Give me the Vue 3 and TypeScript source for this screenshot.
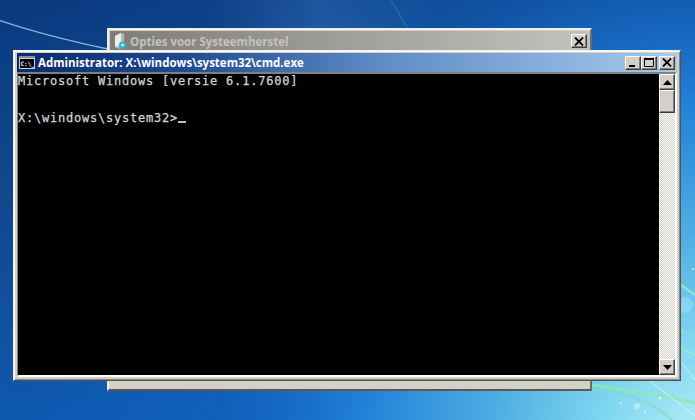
<script setup lang="ts">
const consoleLines: string[] = [
  'Microsoft Windows [versie 6.1.7600]',
  '',
  '',
  'X:\\windows\\system32>',
]
</script>

<template>
  <div class="desktop">
    <svg class="streaks" width="695" height="420" viewBox="0 0 695 420">
      <defs>
        <radialGradient id="glow" cx="700" cy="440" r="620" gradientUnits="userSpaceOnUse">
          <stop offset="0" stop-color="#b4eef6" />
          <stop offset="0.16" stop-color="#7fd6f0" />
          <stop offset="0.34" stop-color="#4cace2" />
          <stop offset="0.55" stop-color="#2080d8" />
          <stop offset="0.78" stop-color="#1264c4" stop-opacity="0.35" />
          <stop offset="1" stop-color="#1264c4" stop-opacity="0" />
        </radialGradient>
        <linearGradient id="sheen" x1="0" y1="0" x2="1" y2="0">
          <stop offset="0" stop-color="#6aa0e0" stop-opacity="0" />
          <stop offset="0.5" stop-color="#6aa0e0" stop-opacity="0.18" />
          <stop offset="1" stop-color="#6aa0e0" stop-opacity="0" />
        </linearGradient>
      </defs>
      <rect width="695" height="420" fill="url(#glow)" />
      <rect x="200" y="0" width="240" height="50" fill="url(#sheen)" />
      <path d="M0 20.5 C40 34 75 42 108 49" stroke="#a8cbe8" stroke-width="1.3" fill="none" opacity="0.85" />
      <path d="M391 0 L408 29" stroke="#2c8f92" stroke-width="1" fill="none" opacity="0.8" />
      <path d="M592 385 C630 390 665 396 695 403" stroke="#8ee8b0" stroke-width="3" fill="none" opacity="0.8" />
      <path d="M592 389 C625 392 650 400 672 420" stroke="#79dfc0" stroke-width="3" fill="none" opacity="0.55" />
      <path d="M650 381 L695 416" stroke="#d8f6fb" stroke-width="1" fill="none" opacity="0.85" />
      <path d="M681 285 L695 295" stroke="#a8ecc8" stroke-width="2.5" fill="none" opacity="0.7" />
      <path d="M681 330 L695 337" stroke="#a8ecc8" stroke-width="2" fill="none" opacity="0.35" />
      <path d="M681 348 L695 355" stroke="#a8ecc8" stroke-width="2.5" fill="none" opacity="0.55" />
      <path d="M681 362 L695 380" stroke="#e0f8fb" stroke-width="1" fill="none" opacity="0.7" />
      <circle cx="685" cy="305" r="8" fill="#c0ecf8" opacity="0.35" />
      <circle cx="637" cy="406" r="3" fill="#c8f0f8" opacity="0.7" />
      <circle cx="660" cy="398" r="1.5" fill="#e2f8fc" opacity="0.8" />
      <circle cx="621" cy="403" r="1" fill="#e2f8fc" opacity="0.8" />
      <circle cx="645" cy="412" r="1" fill="#e2f8fc" opacity="0.8" />
      <circle cx="693" cy="269" r="1" fill="#e2f8fc" opacity="0.9" />
    </svg>

    <section class="win back">
      <header class="back-title">
        <svg class="back-icon" width="13" height="16" viewBox="0 0 13 16">
          <path d="M1 3 L7 0 L10 1 L10 14 L5 16 L1 14 Z" fill="#b8bab8" />
          <path d="M1 3 L7 0 L7 12 L1 14 Z" fill="#eceeea" />
          <circle cx="8.5" cy="12" r="3.6" fill="#2fb2d2" />
          <circle cx="8.5" cy="12" r="1.3" fill="#e4f8fb" />
        </svg>
        <span class="back-text">Opties voor Systeemherstel</span>
        <button class="cap-btn">
          <svg width="10" height="9" viewBox="0 0 10 9"><path d="M1 0.5 L9 8.5 M9 0.5 L1 8.5" stroke="#000" stroke-width="1.8" fill="none" /></svg>
        </button>
      </header>
    </section>

    <section class="win cmd">
      <header class="cmd-title">
        <svg class="cmd-icon" width="16" height="13" viewBox="0 0 16 13">
          <rect x="0" y="0" width="16" height="13" fill="#c8ccd4" />
          <rect x="0" y="0" width="16" height="2" fill="#8a8f9a" />
          <rect x="1" y="3" width="14" height="9" fill="#000" />
          <text x="1.5" y="10" class="cmd-icon-text">C:\_</text>
        </svg>
        <span class="cmd-text">Administrator: X:\windows\system32\cmd.exe</span>
        <div class="cap-group">
          <button class="cap-btn">
            <svg width="10" height="9" viewBox="0 0 10 9"><rect x="1" y="7" width="6" height="2" fill="#000" /></svg>
          </button>
          <button class="cap-btn">
            <svg width="10" height="9" viewBox="0 0 10 9"><path d="M0.5 1 H9.5 V8.5 H0.5 Z" stroke="#000" fill="none" /><rect x="0" y="0" width="10" height="2" fill="#000" /></svg>
          </button>
          <button class="cap-btn close">
            <svg width="10" height="9" viewBox="0 0 10 9"><path d="M1 0.5 L9 8.5 M9 0.5 L1 8.5" stroke="#000" stroke-width="1.8" fill="none" /></svg>
          </button>
        </div>
      </header>
      <div class="client">
        <pre class="console">{{ consoleLines.join('\n') }}<span class="cursor"></span></pre>
        <aside class="scrollbar">
          <button class="sb-btn">
            <svg width="9" height="5" viewBox="0 0 9 5"><path d="M4.5 0 L9 5 H0 Z" fill="#000" /></svg>
          </button>
          <div class="thumb"></div>
          <div class="track"></div>
          <button class="sb-btn">
            <svg width="9" height="5" viewBox="0 0 9 5"><path d="M0 0 H9 L4.5 5 Z" fill="#000" /></svg>
          </button>
        </aside>
      </div>
    </section>
  </div>
</template>

<style>
html, body { margin: 0; padding: 0; overflow: hidden; }
</style>

<style scoped>
.desktop {
  position: relative;
  width: 695px;
  height: 420px;
  overflow: hidden;
  background: linear-gradient(160deg, #0a3a80 0%, #10488f 30%, #0f5ab2 65%, #1264c4 100%);
}
.streaks { position: absolute; left: 0; top: 0; }
.win { position: absolute; box-sizing: border-box; }
.back {
  left: 107px;
  top: 28px;
  width: 485px;
  height: 363px;
  padding: 1px 0 0 1px;
  background: #d4d0c8;
  border-top: 2px solid #efeeea;
  border-left: 2px solid #efeeea;
  border-right: 2px solid #6e6c68;
  border-bottom: 2px solid #5a5854;
}
.back-title {
  display: flex;
  align-items: center;
  height: 20px;
  padding: 0 3px 0 4px;
  background: linear-gradient(90deg, #7f7d79 0%, #9a9895 40%, #c4c2be 100%);
}
.back-icon { flex: none; margin-right: 3px; }
.back-text {
  flex: 1;
  font: bold 11.5px "Open Sans", sans-serif;
  color: #c4c2bd;
  white-space: nowrap;
}
.cap-btn {
  box-sizing: border-box;
  width: 16px;
  height: 14px;
  padding: 0;
  display: flex;
  align-items: center;
  justify-content: center;
  background: #d4d0c8;
  border: 1px solid;
  border-color: #ffffff #404040 #404040 #ffffff;
  box-shadow: inset -1px -1px 0 #808080;
}
.cmd {
  left: 13px;
  top: 50px;
  width: 668px;
  height: 331px;
  padding: 2px 3px 3px;
  background: #d4d0c8;
  border-top: 1px solid #f2f1ed;
  border-left: 1px solid #f2f1ed;
  border-right: 1px solid #55534f;
  border-bottom: 1px solid #55534f;
  display: flex;
  flex-direction: column;
  box-shadow: inset 1px 1px 0 #fff, inset -1px -1px 0 #8a8884;
}
.cmd-title {
  flex: none;
  display: flex;
  align-items: center;
  height: 19px;
  padding: 0 2px 0 2px;
  background: linear-gradient(90deg, #0a2a6c 0%, #1c4a92 25%, #5f8cc6 55%, #a6caee 100%);
}
.cmd-icon { flex: none; margin-right: 3px; }
.cmd-icon-text { font: bold 6px "DejaVu Sans Mono", monospace; fill: #fff; }
.cmd-text {
  flex: 1;
  font: bold 11.5px "Open Sans", sans-serif;
  color: #fff;
  white-space: nowrap;
}
.cap-group { display: flex; }
.cap-group .close { margin-left: 2px; }
.client {
  flex: 1;
  min-height: 0;
  display: flex;
  border-top: 2px solid #808080;
  border-left: 1px solid #808080;
  border-right: 2px solid #fff;
  border-bottom: 2px solid #fff;
}
.console {
  flex: 1;
  margin: 0;
  padding: 1px 0 0 0;
  background: #000;
  color: #d4d4d4;
  font: 12px/12.4px "DejaVu Sans Mono", monospace;
  letter-spacing: 0.78px;
  -webkit-text-stroke: 0.25px #d4d4d4;
  overflow: hidden;
}
.cursor {
  display: inline-block;
  width: 8px;
  height: 2px;
  background: #c0c0c0;
  vertical-align: -1px;
}
.scrollbar {
  flex: none;
  width: 16px;
  display: flex;
  flex-direction: column;
  background: #d4d0c8;
}
.sb-btn, .thumb {
  box-sizing: border-box;
  flex: none;
  width: 16px;
  background: #d4d0c8;
  border: 1px solid;
  border-color: #ffffff #404040 #404040 #ffffff;
  box-shadow: inset -1px -1px 0 #808080;
}
.sb-btn {
  height: 16px;
  padding: 0;
  display: flex;
  align-items: center;
  justify-content: center;
}
.thumb { height: 23px; }
.track {
  flex: 1;
  background-color: #fff;
  background-image: conic-gradient(#d4d0c8 25%, #fff 0 50%, #d4d0c8 0 75%, #fff 0);
  background-size: 2px 2px;
}
</style>
